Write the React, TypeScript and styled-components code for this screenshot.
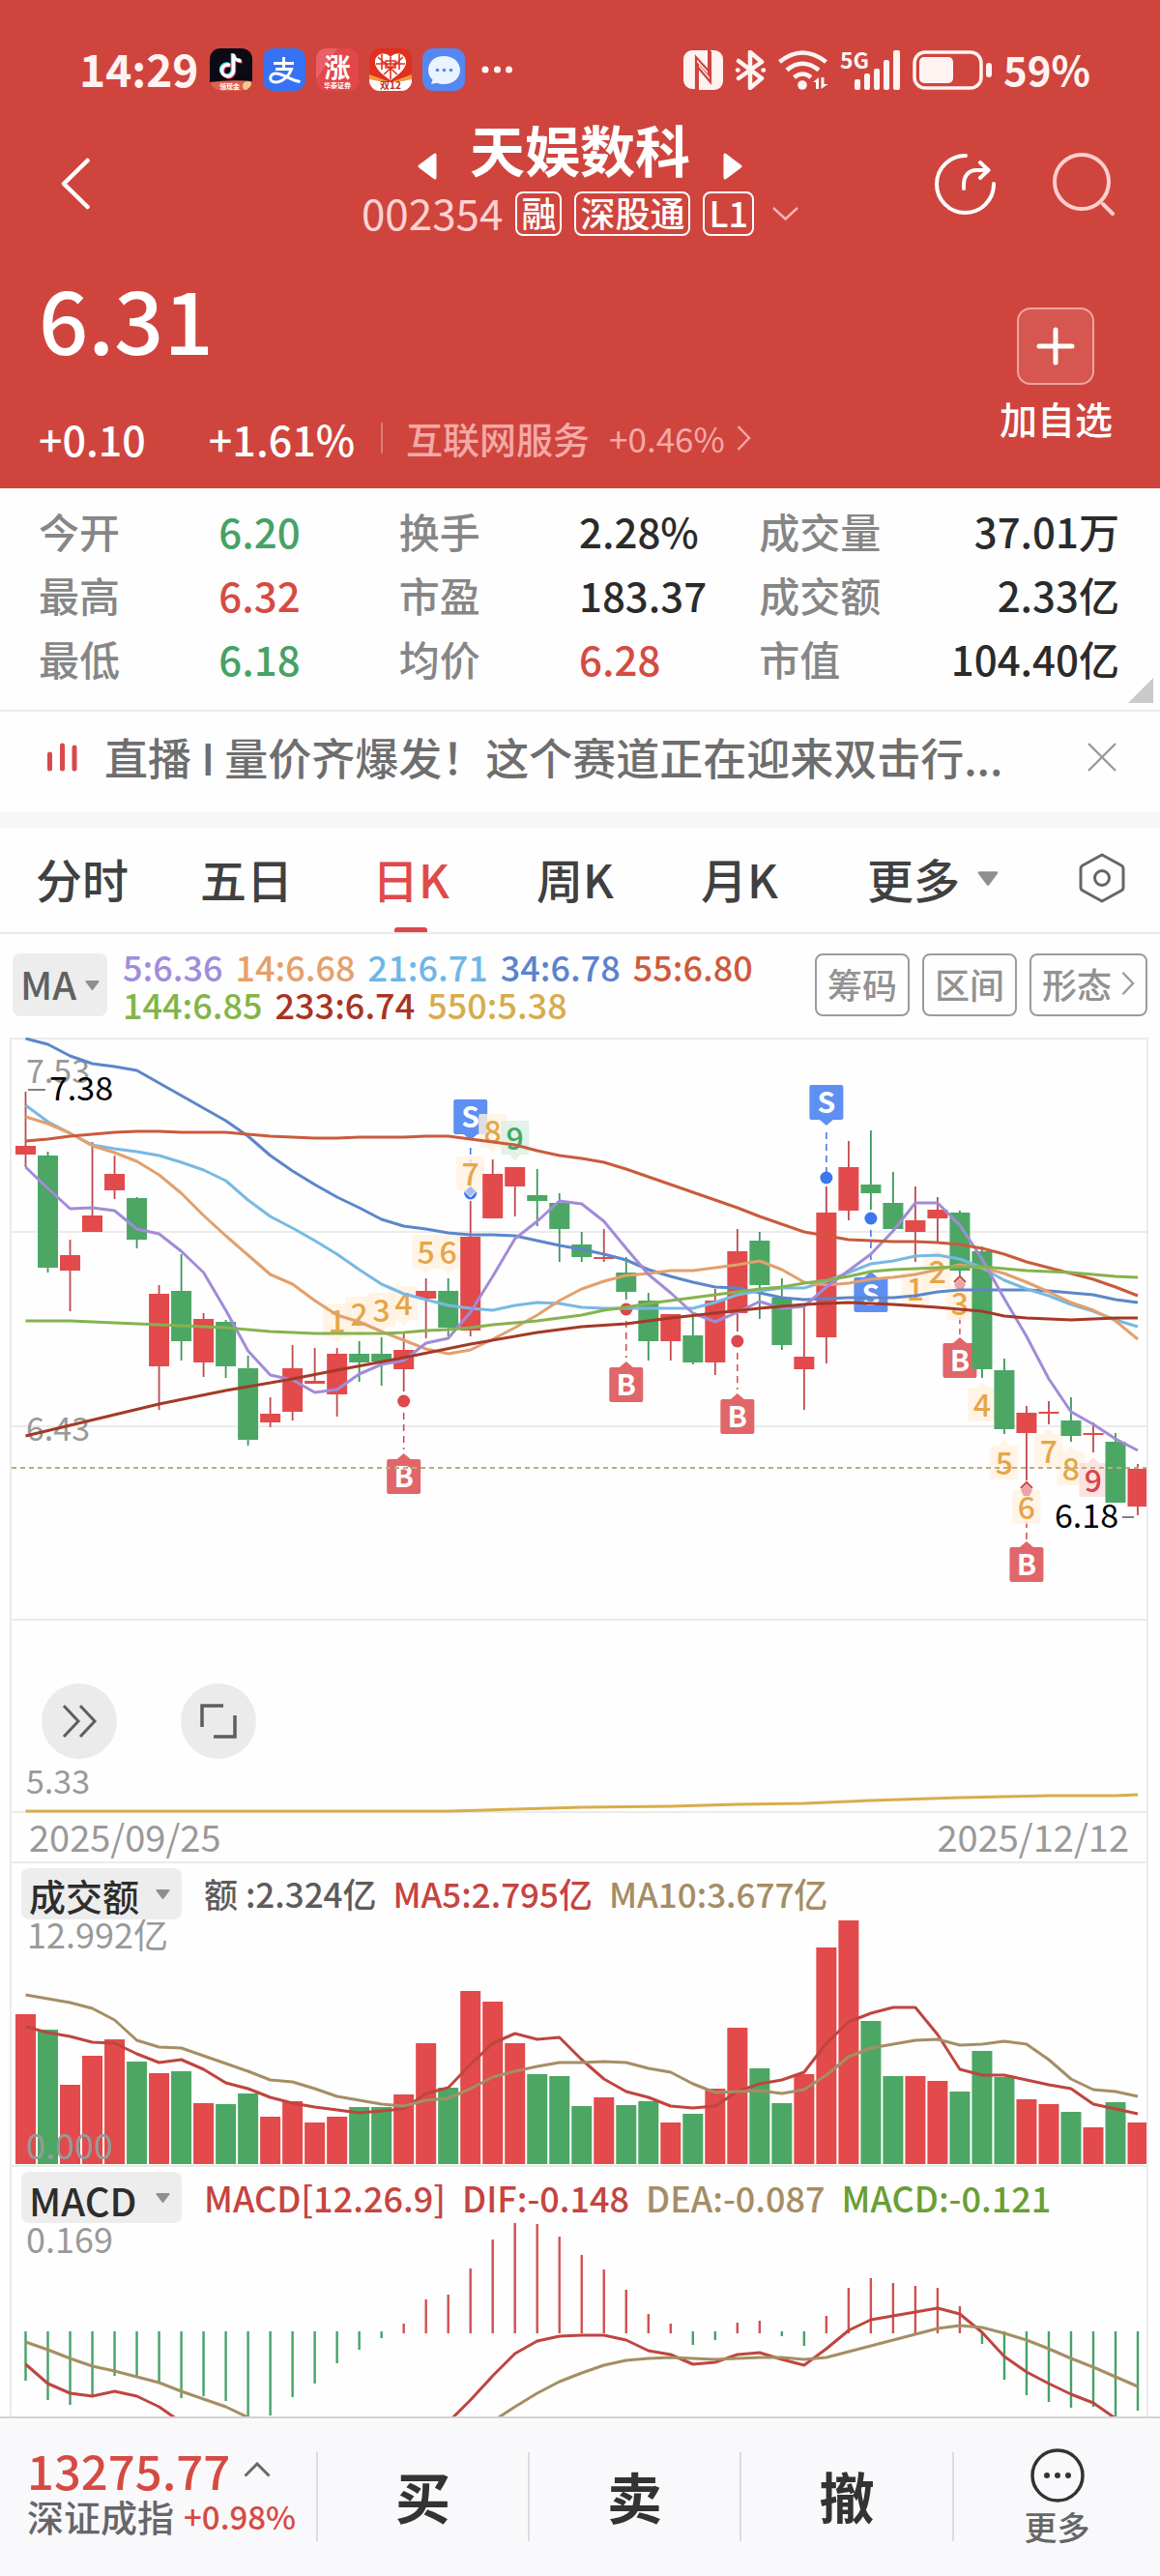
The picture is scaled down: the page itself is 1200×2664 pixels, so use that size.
import React from "react";
import styled, { createGlobalStyle } from "styled-components";

const RED = "#e24a4b";
const GREEN = "#4ca765";
const INK = "#333333";

const GlobalStyle = createGlobalStyle`
  *, *::before, *::after { box-sizing: border-box; }
  body {
    margin: 0;
    background: #fefefe;
    color: ${INK};
    font-family: "Noto Sans CJK SC", "Noto Sans", sans-serif;
    font-weight: 500;
  }
  button, select { font: inherit; color: inherit; border: 0; padding: 0; margin: 0; background: none; cursor: pointer; }
  a { color: inherit; text-decoration: none; }
  svg { display: block; flex: none; }
  h1, p, dl, dd, dt { margin: 0; font: inherit; }
`;

const Page = styled.main`
  width: 100%;
  overflow-x: hidden;
`;

/* ---------- header ---------- */

const Header = styled.header`
  background: #cf453e;
  color: #fff;
`;

const StatusBar = styled.div`
  display: flex;
  justify-content: space-between;
  padding: 50px 72px 0 82px;
  color: #fff3f2;
  font-size: 46px;
  line-height: 44px;
  font-weight: 700;
`;

const StatusGroup = styled.div<{ $gap: number }>`
  display: flex;
  align-items: center;
  gap: ${(p) => p.$gap}px;
`;

const Clock = styled.span`
  margin-top: -4px;
`;

const Battery = styled.span`
  margin-top: -2px;
  font-size: 42px;
`;

const Nav = styled.nav`
  display: grid;
  grid-template-columns: 1fr auto 1fr;
  align-items: center;
  min-height: 140px;
  margin-top: 26px;
  padding: 0 46px;
`;

const BackButton = styled.button`
  justify-self: start;
  margin-left: 16px;
`;

const NavCenter = styled.div`
  align-self: start;
  display: flex;
  flex-direction: column;
  align-items: center;
  gap: 12px;
`;

const TitleRow = styled.div`
  display: flex;
  align-items: flex-end;
  gap: 34px;
`;

const Title = styled.h1`
  font-size: 57px;
  line-height: 66px;
  font-weight: 700;
`;

const CodeRow = styled.div`
  display: flex;
  align-items: center;
  gap: 13px;
  font-size: 44px;
  line-height: 46px;
`;

const Code = styled.span`
  margin-top: -4px;
  color: #ffd2d0;
  font-weight: 400;
`;

const Tag = styled.span`
  height: 46px;
  padding: 0 4px;
  border: 2px solid #fff;
  border-radius: 8px;
  font-size: 36px;
  line-height: 38px;
`;

const NavActions = styled.div`
  display: flex;
  justify-content: flex-end;
  gap: 58px;
`;

const Quote = styled.section`
  display: flex;
  justify-content: space-between;
  padding: 18px 49px 28px 40px;
`;

const Price = styled.p`
  font-size: 90px;
  line-height: 100px;
  margin-bottom: 51px;
`;

const Changes = styled.div`
  display: flex;
  align-items: center;
  font-size: 43px;
  line-height: 48px;
`;

const Change = styled.span`
  margin-right: 65px;
`;

const Sector = styled.a`
  display: flex;
  align-items: center;
  gap: 20px;
  margin-left: -38px;
  padding-left: 24px;
  color: #f4a9a6;
  font-size: 38px;
  line-height: 32px;
  border-left: 2px solid #dc7b76;
`;

const SectorChange = styled.span`
  display: flex;
  align-items: center;
  gap: 12px;
  font-size: 35px;
  font-weight: 400;
`;

const AddWatch = styled.button`
  display: flex;
  flex-direction: column;
  align-items: center;
  align-self: flex-start;
  gap: 10px;
  margin-top: 40px;
  font-size: 39px;
  line-height: 48px;
`;

const AddBox = styled.span`
  display: grid;
  place-items: center;
  width: 80px;
  height: 80px;
  border: 2px solid #eda5a1;
  border-radius: 14px;
  background: #d55750;
`;

/* ---------- figures ---------- */

const Stats = styled.dl`
  position: relative;
  display: grid;
  grid-template-columns: repeat(3, 1fr);
  padding: 11px 42px 20px 40px;
  border-bottom: 2px solid #ececec;
  font-size: 42px;
  line-height: 66px;
`;

const Stat = styled.div`
  display: flex;
`;

const StatName = styled.dt`
  width: 50%;
  color: #868686;
`;

const StatValue = styled.dd<{ $color?: string; $end?: boolean }>`
  flex: 1;
  white-space: nowrap;
  text-align: ${(p) => (p.$end ? "right" : "left")};
  color: ${(p) => p.$color || "#2b2b2b"};
`;

const Corner = styled.i`
  position: absolute;
  right: 7px;
  bottom: 7px;
  border-left: 26px solid transparent;
  border-bottom: 26px solid #cacaca;
`;

const Banner = styled.section`
  display: flex;
  align-items: center;
  padding: 13px 44px 23px 48px;
  border-bottom: 16px solid #f7f7f7;
  color: #6e6e6e;
  font-size: 45px;
  line-height: 68px;
`;

const BannerText = styled.a`
  flex: 1;
  min-width: 0;
  margin: 0 60px 0 28px;
  overflow: hidden;
  white-space: nowrap;
  text-overflow: ellipsis;
`;

const Tabs = styled.div`
  display: grid;
  grid-template-columns: repeat(5, 17fr) 23fr 12fr;
  border-bottom: 2px solid #e8e8e8;
`;

const Tab = styled.button<{ $active?: boolean }>`
  position: relative;
  display: flex;
  align-items: center;
  justify-content: center;
  gap: 18px;
  height: 108px;
  padding-bottom: 4px;
  font-size: 48px;
  color: ${(p) => (p.$active ? "#de4a4d" : "#404040")};

  &::after {
    content: "";
    display: ${(p) => (p.$active ? "block" : "none")};
    position: absolute;
    bottom: 0;
    width: 34px;
    height: 5px;
    border-radius: 3px 3px 0 0;
    background: #d9484b;
  }
`;

/* ---------- chart ---------- */

const Legend = styled.div`
  display: flex;
  align-items: center;
  padding: 20px 13px 22px;
`;

const Picker = styled.label<{ $w: number; $h: number; $right: number }>`
  position: relative;
  display: block;
  width: ${(p) => p.$w}px;
  height: ${(p) => p.$h}px;
  border-radius: 8px;
  background: #ededed;

  svg {
    position: absolute;
    top: calc(50% - 5px);
    right: ${(p) => p.$right}px;
    pointer-events: none;
  }
`;

const PickerSelect = styled.select<{ $size: number; $color: string }>`
  appearance: none;
  width: 100%;
  height: 100%;
  padding: 0 0 4px 8px;
  font-size: ${(p) => p.$size}px;
  color: ${(p) => p.$color};
`;

const Averages = styled.div`
  flex: 1;
  margin-left: 16px;
  font-size: 36px;
  line-height: 39px;
  margin-block: -7px;
`;

const AverageRow = styled.div`
  display: flex;
  gap: 13px;
  white-space: nowrap;
`;

const Value = styled.span<{ $color: string }>`
  color: ${(p) => p.$color};
`;

const Tools = styled.div`
  display: flex;
  gap: 13px;
`;

const Tool = styled.button`
  display: flex;
  align-items: center;
  gap: 10px;
  height: 65px;
  padding: 0 11px 4px;
  border: 2px solid #9c9c9c;
  border-radius: 8px;
  color: #929292;
  font-size: 36px;
`;

const Frame = styled.section`
  position: relative;
  margin: 0 12px 0 10px;
  border: solid #ebebeb;
  border-width: 0 2px;
`;

const Plot = styled.svg`
  width: 100%;
  height: auto;
`;

const PlotArea = styled.div`
  position: relative;
`;

const FloatTools = styled.div`
  position: absolute;
  left: 31px;
  bottom: 57px;
  display: flex;
  gap: 66px;
`;

const RoundButton = styled.button`
  display: grid;
  place-items: center;
  width: 78px;
  height: 78px;
  border-radius: 50%;
  background: #ebebeb;
`;

const Dates = styled.div`
  display: flex;
  justify-content: space-between;
  padding: 0 18px 4px;
  border-bottom: 2px solid #ebebeb;
  color: #999;
  font-size: 38px;
  line-height: 45px;
  font-weight: 400;
`;

const PaneHead = styled.div`
  display: flex;
  align-items: flex-end;
  height: 58px;
  padding-left: 10px;
`;

const PaneValues = styled.div<{ $size: number }>`
  display: flex;
  gap: 17px;
  margin-left: 23px;
  font-size: ${(p) => p.$size}px;
  line-height: 54px;
  white-space: nowrap;
`;

/* ---------- bottom bar ---------- */

const BottomBar = styled.footer`
  display: grid;
  grid-template-columns: 327fr 219fr 219fr 220fr 215fr;
  padding: 35px 0 37px;
  border-top: 2px solid #d2d2d4;
  background: #f9f9fb;
`;

const IndexCell = styled.button`
  display: flex;
  flex-direction: column;
  justify-content: center;
  height: 92px;
  padding: 0 0 8px 28px;
  text-align: left;
  white-space: nowrap;
  line-height: 48px;
  color: #d54b43;
`;

const IndexValue = styled.span`
  display: flex;
  align-items: center;
  gap: 14px;
  font-size: 49px;
`;

const IndexName = styled.span`
  display: flex;
  gap: 10px;
  color: #66666a;
  font-size: 38px;
`;

const IndexChange = styled.span`
  color: #d54b43;
  font-size: 33px;
`;

const Action = styled.button`
  height: 92px;
  padding-bottom: 4px;
  border-left: 2px solid #dcdce0;
  font-size: 57px;
  line-height: 84px;
  font-weight: 700;
`;

const MoreAction = styled.button`
  display: flex;
  flex-direction: column;
  align-items: center;
  justify-content: center;
  gap: 6px;
  height: 92px;
  border-left: 2px solid #dcdce0;
  color: #666;
  font-size: 34px;
  line-height: 38px;
`;

/* ---------- data ---------- */

const X0 = 26.5;
const STEP = 23.01;
const cx = (i: number) => X0 + STEP * i;

// direction, high, body top, body bottom, low
type Candle = [number, number, number, number, number];
const candles: Candle[] = [
  [1, 1129, 1185, 1194, 1207], [0, 1191, 1195, 1311, 1316], [1, 1282, 1298, 1314, 1356], [1, 1181, 1257, 1274, 1274],
  [1, 1195, 1214, 1231, 1240], [0, 1238, 1239, 1282, 1291], [1, 1329, 1338, 1413, 1458], [0, 1297, 1335, 1387, 1407],
  [1, 1358, 1364, 1409, 1424], [0, 1365, 1367, 1413, 1425], [0, 1402, 1415, 1489, 1495], [1, 1445, 1462, 1471, 1476],
  [1, 1391, 1415, 1460, 1469], [1, 1394, 1428, 1431, 1431], [1, 1394, 1400, 1442, 1465], [0, 1387, 1400, 1409, 1429],
  [0, 1383, 1400, 1408, 1433], [1, 1378, 1396, 1416, 1439], [1, 1322, 1335, 1343, 1384], [0, 1322, 1335, 1373, 1382],
  [1, 1242, 1279, 1376, 1382], [1, 1199, 1214, 1260, 1260], [1, 1207, 1207, 1227, 1258], [0, 1209, 1236, 1242, 1268],
  [0, 1234, 1244, 1271, 1305], [0, 1274, 1287, 1300, 1305], [1, 1271, 1300, 1302, 1305], [0, 1300, 1316, 1336, 1344],
  [0, 1337, 1345, 1387, 1407], [1, 1359, 1359, 1387, 1407], [0, 1360, 1381, 1409, 1411], [1, 1333, 1345, 1409, 1422],
  [1, 1271, 1294, 1358, 1377], [0, 1274, 1283, 1329, 1364], [0, 1322, 1342, 1391, 1396], [1, 1352, 1403, 1416, 1458],
  [1, 1227, 1254, 1383, 1410], [1, 1180, 1207, 1252, 1262], [0, 1169, 1225, 1234, 1251], [0, 1212, 1244, 1271, 1271],
  [1, 1227, 1262, 1274, 1305], [1, 1238, 1251, 1260, 1285], [0, 1252, 1254, 1314, 1320], [0, 1289, 1294, 1416, 1425],
  [0, 1405, 1417, 1478, 1483], [1, 1454, 1461, 1482, 1531], [1, 1449, 1460, 1462, 1473], [0, 1445, 1469, 1485, 1491],
  [1, 1471, 1482, 1484, 1502], [0, 1482, 1491, 1554, 1554], [1, 1514, 1519, 1558, 1567],
];

const priceLines: { color: string; ys?: number[]; pts?: [number, number][] }[] = [
  { color: "#5c86ca", ys: [1074, 1080, 1092, 1100, 1103, 1107, 1120, 1133, 1146, 1159, 1175, 1195, 1211, 1225, 1238, 1249, 1261, 1268, 1271, 1275, 1277, 1277, 1278, 1283, 1288, 1292, 1297, 1303, 1313, 1320, 1326, 1331, 1332, 1337, 1342, 1344, 1343, 1342, 1342, 1342, 1340, 1336, 1334, 1334, 1334, 1334, 1335, 1337, 1339, 1344, 1347] },
  { color: "#77b9e3", ys: [1143, 1160, 1172, 1184, 1188, 1191, 1195, 1202, 1210, 1221, 1241, 1258, 1270, 1283, 1297, 1313, 1328, 1338, 1344, 1350, 1353, 1355, 1350, 1347, 1348, 1352, 1353, 1353, 1353, 1353, 1353, 1347, 1339, 1335, 1332, 1332, 1325, 1316, 1307, 1304, 1299, 1298, 1302, 1311, 1324, 1333, 1340, 1349, 1356, 1365, 1372] },
  { color: "#e2a06c", ys: [1155, 1162, 1172, 1185, 1192, 1201, 1215, 1234, 1257, 1278, 1298, 1318, 1328, 1345, 1360, 1367, 1377, 1386, 1395, 1400, 1396, 1385, 1373, 1360, 1345, 1333, 1325, 1319, 1317, 1314, 1314, 1311, 1308, 1304, 1313, 1326, 1329, 1327, 1323, 1321, 1318, 1313, 1308, 1311, 1317, 1326, 1336, 1347, 1355, 1366, 1385] },
  { color: "#a28bd8", ys: [1207, 1229, 1250, 1249, 1252, 1271, 1276, 1294, 1316, 1355, 1397, 1422, 1427, 1440, 1437, 1421, 1411, 1407, 1389, 1384, 1357, 1320, 1281, 1263, 1242, 1245, 1263, 1291, 1318, 1337, 1358, 1367, 1357, 1346, 1353, 1351, 1331, 1314, 1297, 1273, 1244, 1244, 1267, 1302, 1343, 1382, 1426, 1460, 1473, 1488, 1500] },
  { color: "#c95b3d", ys: [1180, 1178, 1175, 1173, 1171, 1170, 1170, 1171, 1171, 1171, 1173, 1175, 1176, 1177, 1177, 1176, 1176, 1176, 1175, 1175, 1178, 1181, 1184, 1190, 1195, 1198, 1202, 1209, 1217, 1225, 1233, 1241, 1249, 1258, 1266, 1274, 1278, 1282, 1283, 1284, 1284, 1285, 1287, 1291, 1297, 1305, 1311, 1317, 1323, 1331, 1340] },
  { color: "#85b34e", ys: [1366, 1366, 1366, 1367, 1368, 1369, 1370, 1371, 1372, 1373, 1375, 1377, 1378, 1379, 1379, 1379, 1379, 1378, 1376, 1375, 1373, 1370, 1368, 1366, 1363, 1360, 1355, 1352, 1348, 1345, 1342, 1339, 1336, 1333, 1331, 1327, 1324, 1320, 1315, 1313, 1312, 1311, 1310, 1310, 1312, 1314, 1315, 1316, 1318, 1320, 1321] },
  { color: "#a33a27", pts: [[0, 1485], [4, 1463], [6, 1452], [9, 1438], [12, 1426], [14, 1417], [17, 1404], [20, 1390], [23, 1378], [25, 1372], [27, 1369], [29, 1363], [31, 1358], [33, 1353], [35, 1349], [37, 1347], [39, 1349], [41, 1352], [43, 1356], [44, 1361], [45, 1363], [47, 1365], [49, 1363], [50, 1363]] },
  { color: "#d8ad4b", pts: [[0, 1873], [19, 1873], [22, 1871], [25, 1869], [29, 1868], [32, 1866], [35, 1865], [38, 1862], [42, 1859], [46, 1857], [49, 1857], [50, 1856]] },
];

const volumeTops = [2083, 2099, 2156, 2126, 2109, 2132, 2144, 2142, 2175, 2176, 2165, 2189, 2173, 2195, 2189, 2179, 2179, 2166, 2113, 2159, 2059, 2070, 2113, 2145, 2147, 2178, 2169, 2177, 2173, 2195, 2186, 2160, 2097, 2139, 2175, 2145, 2014, 1986, 2090, 2147, 2147, 2152, 2163, 2121, 2148, 2171, 2176, 2184, 2200, 2174, 2195];
const volumeMa5 = [2096, 2102, 2106, 2112, 2113, 2124, 2133, 2130, 2140, 2154, 2160, 2169, 2175, 2179, 2182, 2185, 2183, 2181, 2165, 2159, 2135, 2113, 2103, 2109, 2107, 2130, 2150, 2163, 2169, 2178, 2180, 2178, 2163, 2155, 2151, 2143, 2113, 2091, 2082, 2076, 2076, 2104, 2140, 2146, 2146, 2151, 2156, 2160, 2176, 2181, 2186];
const volumeMa10 = [2063, 2067, 2071, 2077, 2089, 2110, 2117, 2118, 2126, 2134, 2142, 2151, 2153, 2160, 2168, 2172, 2176, 2178, 2172, 2170, 2160, 2148, 2142, 2137, 2133, 2133, 2132, 2133, 2139, 2143, 2155, 2164, 2163, 2162, 2165, 2161, 2146, 2127, 2118, 2114, 2110, 2109, 2115, 2114, 2111, 2114, 2130, 2150, 2161, 2163, 2168];

const macdEnds = [2462, 2482, 2487, 2477, 2457, 2458, 2463, 2480, 2478, 2483, 2500, 2498, 2479, 2465, 2444, 2430, 2418, 2403, 2378, 2373, 2346, 2316, 2298, 2300, 2313, 2332, 2347, 2368, 2393, 2403, 2425, 2420, 2402, 2400, 2416, 2426, 2395, 2366, 2356, 2361, 2364, 2366, 2385, 2424, 2461, 2477, 2484, 2490, 2489, 2500, 2493];
const dif = [2445, 2465, 2475, 2478, 2473, 2478, 2489, 2505];
const difRest = [2505, 2482, 2457, 2434, 2421, 2416, 2415, 2415, 2420, 2431, 2435, 2445, 2443, 2435, 2433, 2440, 2446, 2429, 2410, 2399, 2395, 2391, 2387, 2393, 2412, 2437, 2453, 2465, 2476, 2485, 2501];
const dea = [2422, 2430, 2439, 2447, 2452, 2458, 2464, 2473, 2481, 2489, 2500, 2510];
const deaRest = [2504, 2489, 2475, 2463, 2454, 2446, 2441, 2439, 2438, 2439, 2440, 2439, 2438, 2438, 2440, 2438, 2432, 2426, 2420, 2414, 2408, 2405, 2407, 2413, 2420, 2429, 2439, 2448, 2458, 2468];

// index, tag top, dot centre, dash start, dash end
const buys = [[17, 1509, 1449, 1461, 1499], [27, 1414, 1354, 1366, 1404], [32, 1447, 1387, 1399, 1437], [42, 1389, 0, 1362, 1380], [45, 1600, 0, 1573, 1592]];
const sells = [[20, 1137, 1234, 1187, 1228, 1], [36, 1122, 1218, 1171, 1212, 1], [38, 1321, 1260, 1272, 1308, 0]];
// index, digit, box top, points down
const counts: [number, string, number, boolean][] = [
  [14, "1", 1348, true], [15, "2", 1341, true], [16, "3", 1337, true], [17, "4", 1330, true], [18, "5", 1277, true],
  [19, "6", 1277, true], [20, "7", 1196, true], [21, "8", 1152, true], [22, "9", 1159, true],
  [40, "1", 1315, false], [41, "2", 1297, false], [42, "3", 1330, false], [43, "4", 1435, false], [44, "5", 1495, false],
  [45, "6", 1541, false], [46, "7", 1483, false], [47, "8", 1501, false], [48, "9", 1513, false],
];

/* ---------- drawing helpers ---------- */

function Series({ ys, from = 0, color, width = 3 }: { ys: number[]; from?: number; color: string; width?: number }) {
  return (
    <polyline fill="none" stroke={color} strokeWidth={width} strokeLinejoin="round" points={ys.map((y, i) => `${cx(i + from)},${y}`).join(" ")} />
  );
}

function Caret({ w = 15, h = 10 }: { w?: number; h?: number }) {
  return (
    <svg width={w} height={h} viewBox="0 0 15 10" aria-hidden="true">
      <path d="M1.5 1h12L7.5 9z" fill="#8f8f8f" stroke="#8f8f8f" strokeWidth="2" strokeLinejoin="round" />
    </svg>
  );
}

function ChevronRight({ w = 15, h = 26, color }: { w?: number; h?: number; color: string }) {
  return (
    <svg width={w} height={h} viewBox="0 0 15 26" fill="none" stroke={color} strokeWidth="2.4" aria-hidden="true">
      <path d="M1.5 1 13 13 1.5 25" />
    </svg>
  );
}

function CountBadge({ i, digit, top, down }: { i: number; digit: string; top: number; down: boolean }) {
  const x = cx(i);
  const nine = digit === "9";
  const fill = nine ? (down ? "#d9efe0" : "#fadcdd") : "#fff1e0";
  const ink = nine ? (down ? "#45a763" : "#dc444a") : "#e6a648";
  const notch = down ? `M${x - 6} ${top + 35}l6 6 6-6z` : `M${x - 6} ${top}l6-6 6 6z`;
  return (
    <g>
      <rect x={x - 14.5} y={top} width="29" height="35" rx="2" fill={fill} opacity="0.8" />
      <path d={notch} fill={fill} opacity="0.8" />
      <text x={x} y={top + 30} textAnchor="middle" fontSize="32" fill={ink}>{digit}</text>
    </g>
  );
}

function TradeTag({ i, top, label, down, color }: { i: number; top: number; label: string; down: boolean; color: string }) {
  const x = cx(i);
  return (
    <g>
      <rect x={x - 17.5} y={top} width="35" height="36" rx="2" fill={color} />
      <path d={down ? `M${x - 7} ${top + 36}l7 6 7-6z` : `M${x - 7} ${top}l7-6 7 6z`} fill={color} />
      <text x={x} y={top + 29} textAnchor="middle" fontSize="30" fontWeight="700" fill="#fff">{label}</text>
    </g>
  );
}

function PriceChart() {
  return (
    <Plot viewBox="12 1073 1174 803" role="img" aria-label="日K线图">
      {[1074, 1274, 1475, 1675, 1874].map((y) => (
        <line key={y} x1="12" x2="1187" y1={y} y2={y} stroke="#ebebeb" strokeWidth="2" />
      ))}
      {buys.map(([i, top, dot, a, b]) => (
        <g key={i}>
          <line x1={cx(i)} x2={cx(i)} y1={a} y2={b} stroke="#d2494c" strokeWidth="1.5" strokeDasharray="7 5" />
          {dot > 0 && <circle cx={cx(i)} cy={dot} r="6.5" fill="#dc484b" />}
          <TradeTag i={i} top={top} label="B" down={false} color="#e1666a" />
        </g>
      ))}
      {sells.map(([i, top, dot, a, b, down]) => (
        <g key={i}>
          <line x1={cx(i)} x2={cx(i)} y1={a} y2={b} stroke="#3d70e0" strokeWidth="1.5" strokeDasharray="7 5" />
          <circle cx={cx(i)} cy={dot} r="6.5" fill="#3e76ec" />
          <TradeTag i={i} top={top} label="S" down={down === 1} color="#5e8ff2" />
        </g>
      ))}
      {counts.map(([i, d, top, down]) => (
        <CountBadge key={i} i={i} digit={d} top={top} down={down} />
      ))}
      <path d={`M${cx(20) - 6} 1232l6 6 6-6-6-6z`} fill="#a9bde4" stroke="#fff" />
      {[[42, 1327], [45, 1540]].map(([i, y]) => (
        <g key={i}>
          <path d={`M${cx(i) - 6} ${y - 1}l6-6 6 6`} fill="none" stroke="#c9484c" strokeWidth="2" />
          <path d={`M${cx(i) - 6} ${y + 1}l6-6 6 6-3 6h-6z`} fill="#eba3a3" />
        </g>
      ))}
      {candles.map(([up, high, top, bottom, low], i) => (
        <g key={i}>
          <line x1={cx(i)} x2={cx(i)} y1={high} y2={low} stroke={up ? "#bd4a4c" : "#3f9558"} strokeWidth="1.8" />
          <rect x={cx(i) - 10.5} y={top} width="21" height={bottom - top} fill={up ? RED : GREEN} />
        </g>
      ))}
      <g fill="#999" fontSize="34" fontWeight="400">
        <text x="27" y="1120">7.53</text>
        <text x="27" y="1490">6.43</text>
        <text x="27" y="1855">5.33</text>
      </g>
      {priceLines.map(({ color, ys, pts }) =>
        ys ? (
          <Series key={color} ys={ys} color={color} />
        ) : (
          <polyline key={color} fill="none" stroke={color} strokeWidth="3" points={(pts || []).map(([i, y]) => `${cx(i)},${y}`).join(" ")} />
        )
      )}
      <line x1="12" x2="1187" y1="1518" y2="1518" stroke="#bbae7e" strokeWidth="2" strokeDasharray="5 4" />
      <g fill="#000" fontSize="34" fontWeight="400">
        <text x="51" y="1138">7.38</text>
        <text x="1091" y="1580">6.18</text>
      </g>
      <path d="M29 1127h18M1161 1569h12" stroke="#808080" strokeWidth="2" />
    </Plot>
  );
}

function VolumeChart() {
  return (
    <Plot viewBox="12 1985 1174 256" role="img" aria-label="成交额柱状图">
      {volumeTops.map((y, i) => (
        <rect key={i} x={cx(i) - 10.5} y={y} width="21" height={2238 - y} fill={candles[i][0] ? RED : GREEN} />
      ))}
      <line x1="12" x2="1187" y1="2240" y2="2240" stroke="#e6ece8" strokeWidth="2" />
      <Series ys={volumeMa5} color="#bf453f" />
      <Series ys={volumeMa10} color="#a58e64" />
      <g fill="#999" fontSize="36" fontWeight="400">
        <text x="28" y="2015">12.992亿</text>
        <text x="27" y="2233">0.000</text>
      </g>
    </Plot>
  );
}

function MacdChart() {
  return (
    <Plot viewBox="12 2299 1174 200" role="img" aria-label="MACD指标图">
      {macdEnds.map((y, i) => (
        <line key={i} x1={cx(i)} x2={cx(i)} y1={y > 2412 ? 2411 : 2413} y2={y} stroke={y > 2412 ? "#45a266" : "#cf5150"} strokeWidth="2.4" />
      ))}
      <Series ys={dif} color="#bf453f" />
      <Series ys={difRest} from={19} color="#bf453f" />
      <Series ys={dea} color="#a58e64" />
      <Series ys={deaRest} from={21} color="#a58e64" />
      <text x="27" y="2330" fill="#999" fontSize="36" fontWeight="400">0.169</text>
    </Plot>
  );
}

/* ---------- status icons ---------- */

function AppIcons() {
  return (
    <>
      <svg width="44" height="44" viewBox="0 0 44 44" aria-hidden="true">
        <defs><clipPath id="app"><rect width="44" height="44" rx="11" /></clipPath></defs>
        <g clipPath="url(#app)">
          <rect width="44" height="44" fill="#0b0b14" />
          <g fill="none" strokeWidth="3.5">
            <path d="M21 17.500a6 6 0 1 0 3.500 5.500V6c0 4 3 7 8 7" stroke="#3fe5e2" transform="translate(-1 -1)" />
            <path d="M21 17.500a6 6 0 1 0 3.500 5.500V6c0 4 3 7 8 7" stroke="#f0385c" transform="translate(1 1)" />
            <path d="M21 17.500a6 6 0 1 0 3.500 5.500V6c0 4 3 7 8 7" stroke="#fff" />
          </g>
          <path d="M0 35q22-3 44-1v10H0z" fill="#e0604f" />
          <circle cx="39" cy="39" r="5" fill="#f5c98c" />
          <text x="10" y="42" fontSize="7" fontWeight="700" fill="#fff">领现金</text>
        </g>
      </svg>
      <svg width="44" height="44" viewBox="0 0 44 44" aria-hidden="true">
        <rect width="44" height="44" rx="11" fill="#3573f4" />
        <path d="M11 15.5h21M21.500 9v12M13 21.500h16.500c-2 6-9 14-17 13.500-8-1-5-10 2-9 8 1 14 7 24 8.500" fill="none" stroke="#fff" strokeWidth="3" />
      </svg>
      <svg width="44" height="44" viewBox="0 0 44 44" aria-hidden="true">
        <rect width="44" height="44" rx="11" fill="#e2474b" />
        <path d="M0 11A11 11 0 0 1 11 0h11L0 32z" fill="#ea6068" />
        <text x="22" y="30" textAnchor="middle" fontSize="27" fontWeight="700" fill="#fff">涨</text>
        <text x="22" y="41" textAnchor="middle" fontSize="7" fontWeight="700" fill="#fff">华泰证券</text>
      </svg>
      <svg width="44" height="44" viewBox="0 0 44 44" aria-hidden="true">
        <g clipPath="url(#app)">
          <rect width="44" height="44" fill="#e0301f" />
          <path d="M0 27l22 8 22-8v17H0z" fill="#f29a3c" />
          <path d="M0 32q22 6 44 0v12H0z" fill="#fff" />
          <path d="M22 33C12 26 5 20 6 13c1-8 11-10 16-4 5-6 15-4 16 4 1 7-6 13-16 20z" fill="#fff" />
          <path d="M22 9v23M9 9l20 18M35 9 15 27M7 16h30M13 6v16M31 6v16M17 13h10v7H17z" fill="none" stroke="#e0301f" strokeWidth="1.6" />
          <text x="22" y="42" textAnchor="middle" fontSize="10" fontWeight="700" fill="#c22a1c">双12</text>
        </g>
      </svg>
      <svg width="44" height="44" viewBox="0 0 44 44" aria-hidden="true">
        <rect width="44" height="44" rx="11" fill="#5587f2" />
        <path d="M22 8c9.500 0 17 6 17 14.500S31.500 37 22 37c-2.500 0-5-.4-7-1.200L9 37l1.500-4.500C7.500 30 6 26.500 6 22.500 6 14 12.500 8 22 8z" fill="#eaf3ff" />
        <g fill="#5587f2"><circle cx="15.500" cy="22.500" r="1.800" /><circle cx="22.500" cy="22.500" r="1.800" /><circle cx="29.500" cy="22.500" r="1.800" /></g>
      </svg>
      <svg width="44" height="44" viewBox="0 0 44 44" fill="#fff3f2" aria-hidden="true">
        <circle cx="10" cy="22" r="3.500" /><circle cx="22.500" cy="22" r="3.500" /><circle cx="34.500" cy="22" r="3.500" />
      </svg>
    </>
  );
}

function SystemIcons() {
  const c = "#fff3f2";
  return (
    <>
      <svg width="41" height="41" viewBox="0 0 41 41" aria-hidden="true">
        <path d="M9 0h16l0 24-13-14v30H9a9 9 0 0 1-9-9V9a9 9 0 0 1 9-9z" fill={c} />
        <path d="M28 0h4a9 9 0 0 1 9 9v23a9 9 0 0 1-9 9H16V15l12 14z" fill={c} />
        <path d="M13 39V7l14.500 16M28 1v32L14.500 17" fill="none" stroke="#cf453e" strokeWidth="2.200" />
      </svg>
      <svg width="33" height="41" viewBox="0 0 33 41" fill="none" stroke={c} strokeWidth="4.500" strokeLinejoin="round" strokeLinecap="round" aria-hidden="true">
        <path d="M4 11l24 18-12 10V2l12 10L4 29M3 20.500h.5M29.500 20.500h.5" />
      </svg>
      <svg width="52" height="41" viewBox="0 0 52 41" aria-hidden="true">
        <g fill="none" stroke={c} strokeWidth="4.500">
          <path d="M1.500 12Q25 -7 49.500 12" /><path d="M9 20.500Q25 7 42 20.500" /><path d="M16.500 28q9-7 17.500 0" />
        </g>
        <circle cx="25" cy="36" r="4.800" fill={c} />
        <path d="M42 28v12h-3v-7h-3zM44.500 40V28h3v7h4z" fill={c} />
      </svg>
      <svg width="63" height="41" viewBox="0 0 63 41" overflow="visible" aria-hidden="true">
        <text x="0" y="19" fontSize="23" fontWeight="700" fill={c}>5G</text>
        <g fill={c}>
          <rect x="15" y="30" width="6" height="11" rx="2" /><rect x="25" y="24" width="6" height="17" rx="2" /><rect x="35" y="19" width="6" height="22" rx="2" />
          <rect x="45" y="10" width="6" height="31" rx="2" /><rect x="55" y="0" width="7" height="41" rx="2" />
        </g>
      </svg>
      <svg width="82" height="41" viewBox="0 0 82 41" aria-hidden="true">
        <rect x="2" y="2" width="69" height="37" rx="11" fill="none" stroke={c} strokeWidth="3.500" />
        <rect x="7" y="7" width="35" height="27" rx="5" fill={c} />
        <rect x="76" y="13" width="6" height="15" rx="3" fill={c} />
      </svg>
    </>
  );
}

/* ---------- page ---------- */

const stats: { name: string; value: string; color?: string; end?: boolean }[] = [
  { name: "今开", value: "6.20", color: "#46a266" },
  { name: "换手", value: "2.28%" },
  { name: "成交量", value: "37.01万", end: true },
  { name: "最高", value: "6.32", color: "#d54b43" },
  { name: "市盈", value: "183.37" },
  { name: "成交额", value: "2.33亿", end: true },
  { name: "最低", value: "6.18", color: "#46a266" },
  { name: "均价", value: "6.28", color: "#d54b43" },
  { name: "市值", value: "104.40亿", end: true },
];

const averages: [string, string][][] = [
  [["5:6.36", "#a28bde"], ["14:6.68", "#e6a06b"], ["21:6.71", "#6fb6e6"], ["34:6.78", "#5b83cc"], ["55:6.80", "#cd5a3c"]],
  [["144:6.85", "#82b548"], ["233:6.74", "#a73423"], ["550:5.38", "#d8ac4a"]],
];

export default function App() {
  return (
    <Page>
      <GlobalStyle />
      <Header>
        <StatusBar>
          <StatusGroup $gap={11}>
            <Clock>14:29</Clock>
            <AppIcons />
          </StatusGroup>
          <StatusGroup $gap={12}>
            <SystemIcons />
            <Battery>59%</Battery>
          </StatusGroup>
        </StatusBar>
        <Nav>
          <BackButton aria-label="返回">
            <svg width="32" height="54" viewBox="0 0 32 54" fill="none" stroke="#fff" strokeWidth="4.500" strokeLinecap="round" strokeLinejoin="round"><path d="M28.500 3 4 27l24.500 24" /></svg>
          </BackButton>
          <NavCenter>
            <TitleRow>
              <button aria-label="上一只"><svg width="20" height="28" viewBox="0 0 20 28"><path d="M18 2v24L2 14z" fill="#fff" stroke="#fff" strokeWidth="3" strokeLinejoin="round" /></svg></button>
              <Title>天娱数科</Title>
              <button aria-label="下一只"><svg width="20" height="28" viewBox="0 0 20 28"><path d="M2 2v24l16-12z" fill="#fff" stroke="#fff" strokeWidth="3" strokeLinejoin="round" /></svg></button>
            </TitleRow>
            <CodeRow>
              <Code>002354</Code>
              <Tag>融</Tag>
              <Tag>深股通</Tag>
              <Tag>L1</Tag>
              <button aria-label="展开"><svg width="33" height="14" viewBox="0 0 33 14" fill="none" stroke="#f5b5b2" strokeWidth="2.400"><path d="M7 1l12.500 11.500L32 1" /></svg></button>
            </CodeRow>
          </NavCenter>
          <NavActions>
            <button aria-label="分享">
              <svg width="64" height="66" viewBox="0 0 64 66" fill="none" stroke="#fff" strokeWidth="4" strokeLinecap="round" strokeLinejoin="round">
                <path d="M33 4A29.500 29.500 0 1 0 62 33" /><path d="M31 38v-4c0-9 5-15 13-15h12M48 11l8.500 8-8.500 8" />
              </svg>
            </button>
            <button aria-label="搜索">
              <svg width="66" height="66" viewBox="0 0 66 66" fill="none" stroke="#ffcfcd" strokeWidth="4" strokeLinecap="round">
                <circle cx="31" cy="31" r="28" /><path d="M53 54l10 10" />
              </svg>
            </button>
          </NavActions>
        </Nav>
        <Quote>
          <div>
            <Price>6.31</Price>
            <Changes>
              <Change>+0.10</Change>
              <Change>+1.61%</Change>
              <Sector href="#sector">
                互联网服务
                <SectorChange>+0.46% <ChevronRight color="#f4a9a6" /></SectorChange>
              </Sector>
            </Changes>
          </div>
          <AddWatch>
            <AddBox>
              <svg width="40" height="40" viewBox="0 0 40 40" stroke="#fff" strokeWidth="5" strokeLinecap="round"><path d="M20 3v34M3 20h34" /></svg>
            </AddBox>
            加自选
          </AddWatch>
        </Quote>
      </Header>

      <Stats>
        {stats.map((s) => (
          <Stat key={s.name}>
            <StatName>{s.name}</StatName>
            <StatValue $color={s.color} $end={s.end}>{s.value}</StatValue>
          </Stat>
        ))}
        <Corner />
      </Stats>

      <Banner>
        <svg width="32" height="32" viewBox="0 0 32 32" stroke="#d8494b" strokeWidth="5" strokeLinecap="round" aria-hidden="true"><path d="M3.500 13v15M16.500 4v24M29 6v22" /></svg>
        <BannerText href="#live">直播 I 量价齐爆发！这个赛道正在迎来双击行...</BannerText>
        <button aria-label="关闭"><svg width="32" height="32" viewBox="0 0 32 32" stroke="#999" strokeWidth="2.400"><path d="M2 2l28 28M30 2 2 30" /></svg></button>
      </Banner>

      <Tabs>
        <Tab>分时</Tab>
        <Tab>五日</Tab>
        <Tab $active aria-current="true">日K</Tab>
        <Tab>周K</Tab>
        <Tab>月K</Tab>
        <Tab aria-haspopup="menu">更多 <Caret w={22} h={15} /></Tab>
        <Tab aria-label="设置">
          <svg width="48" height="52" viewBox="0 0 48 52" fill="none" stroke="#666" strokeWidth="3" strokeLinejoin="round">
            <path d="M24 2l20 11q2 1 2 3.500v19q0 2.500-2 3.500L24 50 4 39q-2-1-2-3.500v-19Q2 14 4 13z" /><circle cx="24" cy="26" r="7.500" />
          </svg>
        </Tab>
      </Tabs>

      <Legend>
        <Picker $w={98} $h={65} $right={8}>
          <PickerSelect $size={40} $color="#606060" aria-label="主图指标"><option>MA</option></PickerSelect>
          <Caret />
        </Picker>
        <Averages>
          {averages.map((row, r) => (
            <AverageRow key={r}>
              {row.map(([text, color]) => <Value key={text} $color={color}>{text}</Value>)}
            </AverageRow>
          ))}
        </Averages>
        <Tools>
          <Tool>筹码</Tool>
          <Tool>区间</Tool>
          <Tool>形态 <ChevronRight w={14} h={26} color="#999" /></Tool>
        </Tools>
      </Legend>

      <Frame>
        <PlotArea>
          <PriceChart />
          <FloatTools>
            <RoundButton aria-label="展开更多">
              <svg width="38" height="36" viewBox="0 0 38 36" fill="none" stroke="#5e5e5e" strokeWidth="3"><path d="M3 2l15 16L3 34M20 2l15 16-15 16" /></svg>
            </RoundButton>
            <RoundButton aria-label="全屏">
              <svg width="38" height="38" viewBox="0 0 38 38" fill="none" stroke="#5e5e5e" strokeWidth="3.500"><path d="M2 25V3h22M36 13v22H14" /></svg>
            </RoundButton>
          </FloatTools>
        </PlotArea>
        <Dates><time>2025/09/25</time><time>2025/12/12</time></Dates>
        <PaneHead>
          <Picker $w={166} $h={53} $right={12}>
            <PickerSelect $size={38} $color="#2d2d2d" aria-label="副图指标一"><option>成交额</option></PickerSelect>
            <Caret />
          </Picker>
          <PaneValues $size={35}>
            <Value $color="#5c5c5c">额 :2.324亿</Value>
            <Value $color="#c5443f">MA5:2.795亿</Value>
            <Value $color="#a58d63">MA10:3.677亿</Value>
          </PaneValues>
        </PaneHead>
        <VolumeChart />
        <PaneHead>
          <Picker $w={166} $h={53} $right={12}>
            <PickerSelect $size={40} $color="#2d2d2d" aria-label="副图指标二"><option>MACD</option></PickerSelect>
            <Caret />
          </Picker>
          <PaneValues $size={36}>
            <Value $color="#c5443f">MACD[12.26.9]</Value>
            <Value $color="#c5443f">DIF:-0.148</Value>
            <Value $color="#a58d63">DEA:-0.087</Value>
            <Value $color="#6a9e33">MACD:-0.121</Value>
          </PaneValues>
        </PaneHead>
        <MacdChart />
      </Frame>

      <BottomBar>
        <IndexCell>
          <IndexValue>
            13275.77
            <svg width="28" height="16" viewBox="0 0 28 16" fill="none" stroke="#6a6a6a" strokeWidth="3" aria-hidden="true"><path d="M1.500 14.500 14 2l12.500 12.500" /></svg>
          </IndexValue>
          <IndexName>深证成指 <IndexChange>+0.98%</IndexChange></IndexName>
        </IndexCell>
        <Action>买</Action>
        <Action>卖</Action>
        <Action>撤</Action>
        <MoreAction>
          <svg width="56" height="56" viewBox="0 0 56 56" aria-hidden="true">
            <circle cx="28" cy="28" r="26" fill="none" stroke="#333" strokeWidth="3.500" />
            <g fill="#333"><circle cx="17" cy="28" r="3" /><circle cx="28" cy="28" r="3" /><circle cx="39" cy="28" r="3" /></g>
          </svg>
          更多
        </MoreAction>
      </BottomBar>
    </Page>
  );
}
